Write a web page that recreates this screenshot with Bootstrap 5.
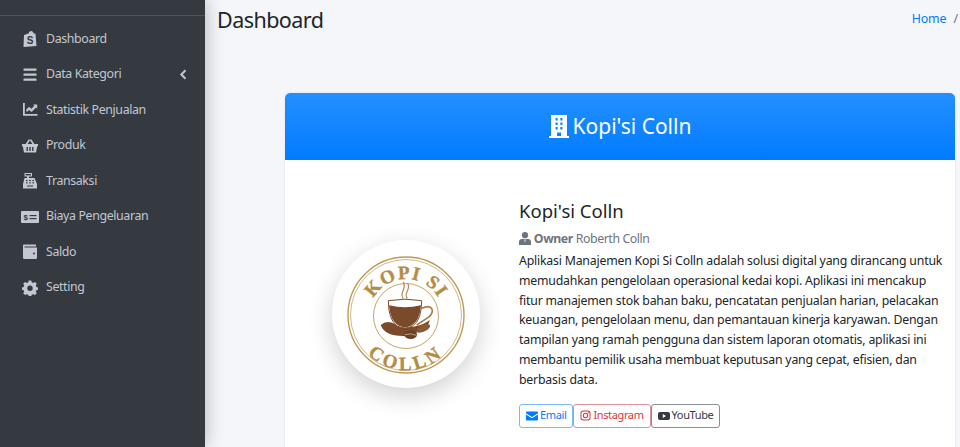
<!DOCTYPE html>
<html lang="id">
<head>
<meta charset="utf-8">
<title>Dashboard</title>
<link href="https://cdn.jsdelivr.net/npm/bootstrap@5.3.0/dist/css/bootstrap.min.css" rel="stylesheet">
<style>
html,body{height:100%;overflow:hidden}
body{font-family:"Noto Sans","Open Sans",sans-serif;background:#f4f6f9;color:#212529;font-size:14px}
.side-panel{width:205px;flex:none;background:#343a40;box-shadow:0 0 18px rgba(0,0,0,.28);z-index:2}
.side-top{height:16px;border-bottom:1px solid #4b545c}
.side-nav{padding-top:5.5px}
.side-nav .nav-link{display:flex;align-items:center;height:35.5px;padding:0 18px 0 20px;color:#c2c7d0;font-size:12.4px;letter-spacing:-.38px}
.side-ico{width:20px;height:16px;margin-right:6px;flex:none;fill:#c2c7d0}
.side-caret{width:8px;height:11px;margin-left:auto;fill:#c2c7d0}
.main-area{min-width:0}
.page-head{padding:4px 0 0 12px;height:93px}
.page-title{font-size:21.5px;font-weight:400;margin:0;line-height:32px;color:#212529;letter-spacing:-.55px}
.crumbs{margin:0;padding-top:6px;font-size:12.4px;letter-spacing:-.1px}
.crumbs a{text-decoration:none;color:#007bff}
.crumbs span{color:#6c757d;margin-left:7px;margin-right:2px}
.brand-card{margin:0 5px 0 80px;border:0;border-radius:4px;box-shadow:0 0 2px rgba(0,0,0,.13);overflow:hidden}
.brand-head{height:67px;background:linear-gradient(180deg,#2590ff,#007bff);color:#fff;font-size:21px;border:0}
.brand-head svg{width:20px;height:23px;fill:#fff;margin-right:4px}
.brand-body{padding:39px 12px 40px 0}
.logo-col{width:234px;flex:none;padding-top:41px;padding-left:47px}
.logo-disc{width:148px;height:148px;border-radius:50%;background:#fff;box-shadow:0 8px 24px rgba(0,0,0,.18);display:block}
.brand-name{font-size:18.5px;font-weight:400;margin:0 0 7px;line-height:24px;color:#212529}
.owner-line{color:#6c757d;font-size:12.3px;line-height:17px;margin-bottom:4px;letter-spacing:-.4px}
.owner-line svg{width:12px;height:13px;fill:#6c757d;vertical-align:-2px}
.about{font-size:12.3px;line-height:19.8px;margin-bottom:14px;color:#212529;letter-spacing:-.2px}
.soc{font-size:11px;padding:0 6px;height:24px;display:inline-flex;align-items:center;gap:2px;border-radius:3px;white-space:nowrap;letter-spacing:-.37px;--bs-btn-color:#343a40;--bs-btn-border-color:#8a8e92}
.soc-blue{--bs-btn-color:#007bff;--bs-btn-border-color:#7db9f5}
.soc-red{--bs-btn-color:#dc3545;--bs-btn-border-color:#e28f98}
.soc svg{width:12px;height:12px;fill:currentColor}
.soc-red svg{width:11px;height:11px}
</style>
</head>
<body class="d-flex">
<aside class="side-panel">
  <div class="side-top"></div>
  <nav class="nav flex-column side-nav">
    <a class="nav-link" href="#"><svg class="side-ico" viewBox="0 0 20 16"><path d="M4 4 8.500 2.400C9.300 .4 10.800-.2 12 .2 13 .6 13.400 1.500 13.500 2.300L15.500 2.800 16.500 15 3.500 16Z"/><text x="10" y="12.500" font-size="10" font-weight="700" text-anchor="middle" fill="#343a40" font-family="Liberation Sans">S</text></svg>Dashboard</a>
    <a class="nav-link" href="#"><svg class="side-ico" viewBox="0 0 20 16"><rect x="3.500" y="1.500" width="13" height="2.200" rx=".5"/><rect x="3.500" y="6.500" width="13" height="2.200" rx=".5"/><rect x="3.500" y="11.500" width="13" height="2.200" rx=".5"/></svg>Data Kategori<svg class="side-caret" viewBox="0 0 8 11"><path d="M5.800.5 7.200 1.900 3.800 5.500 7.200 9.100 5.800 10.500.9 5.500Z"/></svg></a>
    <a class="nav-link" href="#"><svg class="side-ico" viewBox="0 0 20 16"><path d="M3 1H4.800V12H17.500V13.800H3Z"/><path d="M6 8 9 4.800 11.500 6.800 14.300 3.800 13 2.500H17.200V6.700L16 5.500 11.700 10 9 8 7 10Z"/></svg>Statistik Penjualan</a>
    <a class="nav-link" href="#"><svg class="side-ico" viewBox="0 0 20 16"><path d="M2 6H5.600L8.800 1.200 10.200 2.100 7.600 6H12.400L9.800 2.100 11.200 1.200 14.400 6H18V8.200H17.200L16 14.500H4L2.800 8.200H2Z"/><g fill="#343a40"><rect x="6.500" y="9" width="1.400" height="4"/><rect x="9.300" y="9" width="1.400" height="4"/><rect x="12.100" y="9" width="1.400" height="4"/></g></svg>Produk</a>
    <a class="nav-link" href="#"><svg class="side-ico" viewBox="0 0 20 16"><path d="M4.500 0H12V3.500H9V5H14.500L17 11V15.500H3V11L4.500 5H7V3.500H4.500Z"/><g fill="#343a40"><rect x="5.500" y="1" width="5.500" height="1.400"/><rect x="6" y="7" width="1.600" height="1.100"/><rect x="9.200" y="7" width="1.600" height="1.100"/><rect x="12.400" y="7" width="1.600" height="1.100"/><rect x="6" y="9.300" width="1.600" height="1.100"/><rect x="9.200" y="9.300" width="1.600" height="1.100"/><rect x="12.400" y="9.300" width="1.600" height="1.100"/><rect x="7" y="12.500" width="6" height="1"/></g></svg>Transaksi</a>
    <a class="nav-link" href="#"><svg class="side-ico" viewBox="0 0 20 16"><rect x="1" y="2" width="18" height="12" rx="1"/><g fill="#343a40"><rect x="9.500" y="6" width="7" height="1.200"/><rect x="9.500" y="9" width="7" height="1.200"/></g><text x="5.500" y="11" font-size="8" font-weight="700" text-anchor="middle" fill="#343a40" font-family="Liberation Sans">$</text></svg>Biaya Pengeluaran</a>
    <a class="nav-link" href="#"><svg class="side-ico" viewBox="0 0 20 16"><path d="M4 .5H16V2.500H4.500V3.500H17V13.500Q17 15 15.500 15H4.500Q3 15 3 13.500V1.500Q3 .5 4 .5Z"/><circle cx="14" cy="9.500" r="1" fill="#343a40"/></svg>Saldo</a>
    <a class="nav-link" href="#"><svg class="side-ico" viewBox="0 0 20 16"><path fill-rule="evenodd" d="M8.700.5H11.300L11.700 2.300 13.200 2.900 14.900 1.900 16.800 3.800 15.800 5.500 16.400 7 18 7.400V9.800L16.400 10.200 15.800 11.600 16.800 13.300 14.900 15.100 13.200 14.200 11.700 14.800 11.300 16H8.700L8.300 14.800 6.800 14.200 5.100 15.100 3.200 13.300 4.200 11.600 3.600 10.200 2 9.800V7.400L3.600 7 4.200 5.500 3.200 3.800 5.100 1.900 6.800 2.900 8.300 2.300ZM10 5.600A2.700 2.700 0 1 0 10 11 2.700 2.700 0 1 0 10 5.600Z"/></svg>Setting</a>
  </nav>
</aside>
<main class="main-area flex-grow-1">
  <header class="page-head d-flex justify-content-between align-items-start">
    <h1 class="page-title">Dashboard</h1>
    <div class="crumbs"><a href="#">Home</a><span>/</span></div>
  </header>
  <section class="card brand-card">
    <div class="card-header brand-head d-flex align-items-center justify-content-center">
      <svg viewBox="0 0 20 23"><path fill-rule="evenodd" d="M2 0H18V21H20V23H0V21H2ZM6.500 3V5.500H8.700V3ZM11.300 3V5.500H13.500V3ZM6.500 7.500V10H8.700V7.500ZM11.300 7.500V10H13.500V7.500ZM6.500 12V14.500H8.700V12ZM11.300 12V14.500H13.500V12ZM8 17.500V21H12V17.500Z"/></svg>Kopi'si Colln
    </div>
    <div class="card-body brand-body d-flex">
      <div class="logo-col">
        <svg class="logo-disc" viewBox="0 0 148 148">
          <defs>
            <path id="arcTop" d="M37 76A37 37 0 0 1 111 76"/>
            <path id="arcBot" d="M20 76A54 54 0 0 0 128 76"/>
          </defs>
          <g fill="none" stroke="#bf9a55">
            <circle cx="74" cy="75" r="58" stroke-width="1.400"/>
            <circle cx="74" cy="75" r="55.500" stroke-width=".7"/>
            <circle cx="74" cy="76" r="32.500" stroke-width=".9"/>
          </g>
          <g font-family="Liberation Serif" font-weight="700" font-size="19" fill="#b48c45" stroke="#b48c45" stroke-width=".35">
            <text><textPath href="#arcTop" startOffset="50%" text-anchor="middle" letter-spacing="1.200">KOPI SI</textPath></text>
            <text><textPath href="#arcBot" startOffset="50%" text-anchor="middle" letter-spacing="3.500">COLLN</textPath></text>
          </g>
          <g transform="translate(-12,-10) scale(.3333)">
            <g fill="none" stroke="#b08a58" stroke-width="3.500"><path d="M250 205C235 190 262 178 250 155"/><path d="M262 205C248 190 275 178 263 160"/></g>
            <path d="M182 285Q200 268 225 282Q280 305 330 270Q320 305 255 318Q195 320 182 285Z" fill="#7b4a2b"/>
            <path d="M305 235C340 220 345 245 325 262L290 285" fill="none" stroke="#a97c46" stroke-width="5"/>
            <path d="M205 212Q255 203 305 212Q305 270 278 288Q255 300 232 288Q205 270 205 212Z" fill="#fff" stroke="#7b4a2b" stroke-width="3"/>
            <path d="M207 226Q255 238 303 226Q300 270 276 286Q255 297 234 286Q210 270 207 226Z" fill="#7a4a2a"/>
            <ellipse cx="272" cy="314" rx="19" ry="13" fill="#6b4026"/>
            <ellipse cx="310" cy="295" rx="22" ry="10" transform="rotate(-25 310 295)" fill="#8a5a34"/>
            <path d="M255 314Q272 308 289 316" stroke="#e8d7c0" stroke-width="2" fill="none"/>
          </g>
        </svg>
      </div>
      <div class="flex-grow-1">
        <h2 class="brand-name">Kopi'si Colln</h2>
        <div class="owner-line"><svg viewBox="0 0 12 13"><circle cx="6" cy="3.200" r="3.100"/><path d="M0 13V10Q0 7 3 7H9Q12 7 12 10V13ZM5.300 7.500 6 11 6.700 7.500Z"/></svg> <b>Owner</b> Roberth Colln</div>
        <p class="about">Aplikasi Manajemen Kopi Si Colln adalah solusi digital yang dirancang untuk memudahkan pengelolaan operasional kedai kopi. Aplikasi ini mencakup fitur manajemen stok bahan baku, pencatatan penjualan harian, pelacakan keuangan, pengelolaan menu, dan pemantauan kinerja karyawan. Dengan tampilan yang ramah pengguna dan sistem laporan otomatis, aplikasi ini membantu pemilik usaha membuat keputusan yang cepat, efisien, dan berbasis data.</p>
        <div class="d-flex">
          <a class="btn btn-outline-primary soc soc-blue" href="#"><svg viewBox="0 0 12 12"><path d="M0 2.500Q0 1.500 1 1.500H11Q12 1.500 12 2.500V3.200L6 7 0 3.200ZM0 4.500 6 8.300 12 4.500V9.500Q12 10.500 11 10.500H1Q0 10.500 0 9.500Z"/></svg>Email</a>
          <a class="btn btn-outline-danger soc soc-red" href="#"><svg viewBox="0 0 12 12"><path fill-rule="evenodd" d="M3.500.5H8.500Q11.500.5 11.500 3.500V8.500Q11.500 11.500 8.500 11.500H3.500Q.5 11.500.5 8.500V3.500Q.5.5 3.500.5ZM3.500 1.600Q1.600 1.600 1.600 3.500V8.500Q1.600 10.400 3.500 10.400H8.500Q10.400 10.400 10.400 8.500V3.500Q10.400 1.600 8.500 1.600ZM6 3.100A2.900 2.900 0 1 1 6 8.900 2.900 2.900 0 1 1 6 3.100ZM6 4.200A1.800 1.800 0 1 0 6 7.800 1.800 1.800 0 1 0 6 4.200ZM9 2.300A.7.7 0 1 1 9 3.700.7.7 0 1 1 9 2.300Z"/></svg>Instagram</a>
          <a class="btn btn-outline-dark soc" href="#"><svg viewBox="0 0 12 12"><path fill-rule="evenodd" d="M2 2H10Q12 2 12 4V8Q12 10 10 10H2Q0 10 0 8V4Q0 2 2 2ZM4.800 4V8L8 6Z"/></svg>YouTube</a>
        </div>
      </div>
    </div>
  </section>
</main>
</body>
</html>
